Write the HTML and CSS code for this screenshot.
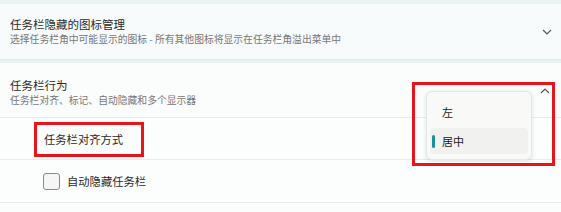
FILE: index.html
```html
<!DOCTYPE html>
<html lang="zh">
<head>
<meta charset="utf-8">
<link rel="stylesheet" href="styles.css">
</head>
<body>
<div class="page">
  <section class="card card-top">
    <div class="text">
      <div class="title">任务栏隐藏的图标管理</div>
      <div class="sub">选择任务栏角中可能显示的图标 - 所有其他图标将显示在任务栏角溢出菜单中</div>
    </div>
    <svg class="chev" width="10" height="6" viewBox="0 0 10 6"><path d="M1 1 L5 5 L9 1" fill="none" stroke="#555" stroke-width="1.2"/></svg>
  </section>
  <section class="card card-main">
    <div class="row head">
      <div class="text">
        <div class="title">任务栏行为</div>
        <div class="sub">任务栏对齐、标记、自动隐藏和多个显示器</div>
      </div>
      <svg class="chev up" width="10" height="6" viewBox="0 0 10 6"><path d="M1 5 L5 1 L9 5" fill="none" stroke="#555" stroke-width="1.2"/></svg>
    </div>
    <div class="row sub-row">
      <span class="label">任务栏对齐方式</span>
    </div>
    <div class="row sub-row check-row">
      <span class="box"></span>
      <span class="label">自动隐藏任务栏</span>
    </div>
    <div class="rest"></div>
  </section>
  <div class="mark mark-label"></div>
  <div class="menu">
    <div class="item">左</div>
    <div class="item sel"><span class="bar"></span>居中</div>
  </div>
  <div class="mark mark-menu"></div>
</div>
</body>
</html>
```
FILE: styles.css
```css
html, body {
  margin: 0;
  padding: 0;
}
body {
  width: 561px;
  height: 212px;
  overflow: hidden;
  background: #ebf2f2;
  font-family: "Noto Sans CJK SC", "Noto Sans", sans-serif;
  color: #222;
}
.page {
  position: relative;
  padding-top: 4px;
  display: flex;
  flex-direction: column;
  gap: 3px;
}
.card {
  background: #f8fbfb;
}
.card-top {
  height: 56px;
  display: flex;
  align-items: center;
  justify-content: space-between;
  padding: 0 9px 0 10px;
  border-bottom: 1px solid #e2eaea;
  box-sizing: border-box;
}
.text {
  display: flex;
  flex-direction: column;
}
.title {
  font-size: 11.5px;
  line-height: 15px;
  color: #2a2a2a;
}
.sub {
  font-size: 9.8px;
  line-height: 14px;
  color: #777;
}
.card-main {
  background: #fbfcfc;
  display: flex;
  flex-direction: column;
  height: 149px;
}
.row {
  border-bottom: 1px solid #e6ebeb;
  box-sizing: border-box;
  display: flex;
  align-items: center;
}
.head {
  height: 55px;
  padding: 4px 11px 0 10px;
  justify-content: space-between;
  align-items: center;
}
.chev.up {
  margin-top: -3px;
}
.sub-row {
  background: #fcfdfd;
}
.row.sub-row:nth-child(2) {
  height: 42px;
  padding-left: 44px;
}
.check-row {
  height: 43px;
  padding-left: 43px;
  gap: 7px;
}
.label {
  font-size: 11.3px;
  color: #2a2a2a;
}
.box {
  width: 15px;
  height: 15px;
  border: 1px solid #8a8a8a;
  border-radius: 3px;
  background: #f6f6f6;
}
.mark {
  position: absolute;
  border: 3px solid #e8141a;
  box-sizing: border-box;
}
.mark-label {
  left: 34px;
  top: 122px;
  width: 110px;
  height: 35px;
}
.mark-menu {
  left: 412px;
  top: 82px;
  width: 143px;
  height: 84px;
}
.menu {
  position: absolute;
  left: 426px;
  top: 91px;
  width: 106px;
  height: 69px;
  background: #f9f9f8;
  border-radius: 6px;
  box-shadow: 0 1px 4px rgba(0,0,0,0.12);
  border: 1px solid #e6e6e6;
  box-sizing: border-box;
  padding: 7px 3px 5px;
  display: flex;
  flex-direction: column;
  gap: 3px;
}
.item {
  height: 26px;
  display: flex;
  align-items: center;
  padding-left: 12px;
  font-size: 11px;
  color: #222;
  border-radius: 4px;
  position: relative;
}
.item.sel {
  background: #f1f1ef;
}
.bar {
  position: absolute;
  left: 2px;
  top: 7px;
  width: 3px;
  height: 13px;
  border-radius: 2px;
  background: #1c8f96;
}
```
